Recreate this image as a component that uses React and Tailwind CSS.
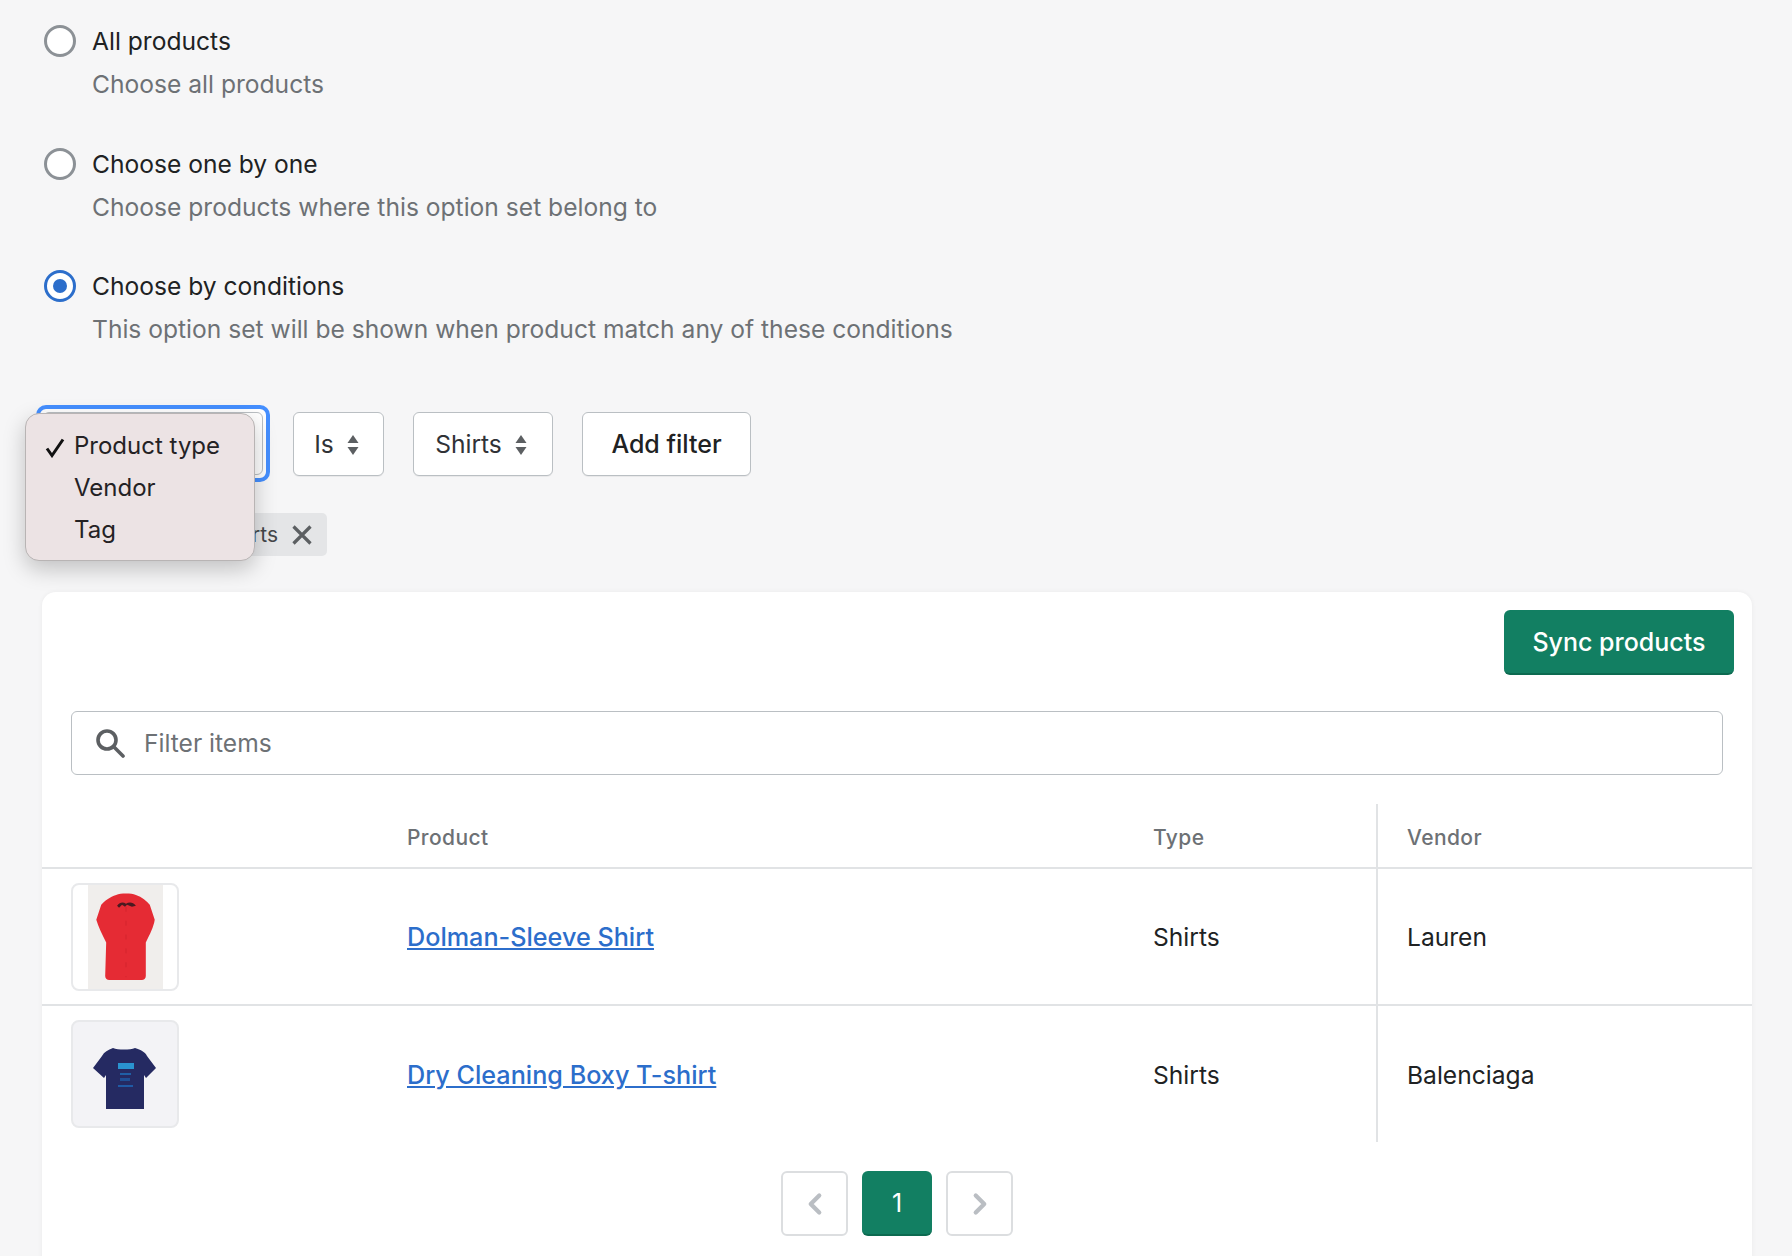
import { ChevronLeft, ChevronRight } from "lucide-react";

const font = "font-['Inter','Liberation_Sans',sans-serif]";

const options = [
  { label: "All products", help: "Choose all products" },
  { label: "Choose one by one", help: "Choose products where this option set belong to" },
  { label: "Choose by conditions", help: "This option set will be shown when product match any of these conditions", checked: true },
];

const products = [
  { name: "Dolman-Sleeve Shirt", vendor: "Lauren", thumb: <RedShirt /> },
  { name: "Dry Cleaning Boxy T-shirt", vendor: "Balenciaga", thumb: <NavyShirt /> },
];

function RedShirt() {
  return (
    <div className="h-full w-full rounded-[8px] border-2 border-[#e8e9eb] bg-white overflow-hidden flex justify-center">
      <div className="h-full w-[75px] bg-[#f0eeec]">
        <svg viewBox="0 0 75 105" className="h-full w-full blur-[0.4px]">
          <path d="M28 10 C33 8 43 8 48 10 C54 12 59 16 62 20 L67 35 C66 42 62 50 58 58 L58 92 C58 95 56 96 54 96 L21 96 C19 96 17 95 17 92 L18 58 C14 50 10 42 8 35 L13 20 C16 16 22 12 28 10 Z" fill="#e52b34" />
          <path d="M29 21 C32 17 35 17 38 19 C41 17 45 17 48 21 L44 22 L39 20 L37 22 L34 20 L31 23 Z" fill="#4a1a20" />
          <path d="M38 22 L38 93" stroke="#cc232c" strokeWidth="0.7" strokeDasharray="5 9" />
        </svg>
      </div>
    </div>
  );
}

function NavyShirt() {
  return (
    <div className="h-full w-full rounded-[8px] border-2 border-[#e8e9eb] bg-[#f3f3f6] overflow-hidden">
      <svg viewBox="0 0 104 104" className="h-full w-full blur-[0.4px]">
        <path d="M40 26 C45 28 57 28 62 26 C68 28 72 30 74 34 L83 46 L73 56 L71 53 L71 87 L33 87 L33 53 L31 56 L20 46 L29 34 C31 30 35 28 40 26 Z" fill="#252a62" />
        <rect x="45" y="41" width="16" height="6" fill="#2a93d0" />
        <rect x="47" y="51" width="11" height="2" fill="#1f5fa6" />
        <rect x="47" y="56" width="10" height="3" fill="#1f4f95" />
        <rect x="45" y="63" width="15" height="2" fill="#1f5aa5" />
      </svg>
    </div>
  );
}

function SelectArrows() {
  return (
    <svg viewBox="0 0 12 20" className="h-[20px] w-[12px] shrink-0 fill-[#5c5f62]">
      <path d="M6 0 L11.5 8 L0.5 8 Z" />
      <path d="M6 20 L11.5 12 L0.5 12 Z" />
    </svg>
  );
}

function Radio({ checked }) {
  return (
    <span className={`flex h-[32px] w-[32px] items-center justify-center rounded-full border-[3px] bg-white ${checked ? "border-[#2c6ecb]" : "border-[#8c9196]"}`}>
      {checked && <span className="h-[14px] w-[14px] rounded-full bg-[#2c6ecb]" />}
    </span>
  );
}

function FilterButton({ label }) {
  return (
    <button className="flex h-[64px] w-full items-center justify-center gap-[13px] rounded-[6px] border border-[#babfc3] bg-white pt-[2px] pr-[4px] shadow-[0_1px_0_rgba(0,0,0,0.05)] text-[24.6px] text-[#303236]">
      {label}
      <SelectArrows />
    </button>
  );
}

export default function App() {
  return (
    <div className={`${font} h-[1256px] overflow-hidden bg-[#f6f6f7] text-[#202223]`}>
      <div className="pt-[20px] pl-[44px]">
        {options.map((o) => (
          <div key={o.label} className="mb-[36.5px]">
            <div className="flex h-[42px] items-center gap-[16px]">
              <Radio checked={o.checked} />
              <span className="pt-[1px] text-[24.6px]">{o.label}</span>
            </div>
            <div className="pl-[48px] text-[24.6px] leading-[44px] text-[#6d7175]">{o.help}</div>
          </div>
        ))}
      </div>

      <div className="relative mt-[54px] pl-[36px]">
        <div className="flex items-center">
          <div className="h-[77px] w-[234px] rounded-[10px] border-[4px] border-[#458fff] bg-white p-[3px]">
            <div className="h-full rounded-[6px] border border-[#babfc3]" />
          </div>
          <div className="ml-[23px] w-[91px]">
            <FilterButton label="Is" />
          </div>
          <div className="ml-[29px] w-[140px]">
            <FilterButton label="Shirts" />
          </div>
          <button className="ml-[29px] h-[64px] w-[169px] rounded-[6px] border border-[#babfc3] bg-white pt-[2px] shadow-[0_1px_0_rgba(0,0,0,0.05)] text-[25px] font-medium">
            Add filter
          </button>
        </div>

        <div className="mt-[31px] ml-[6px] flex h-[43px] w-[285px] items-center justify-end gap-[14px] rounded-[5px] bg-[#e4e5e7] pr-[15px] text-[21px] text-[#44474a]">
          <span className="whitespace-nowrap">Product type is Shirts</span>
          <svg viewBox="0 0 20 20" className="h-[20px] w-[20px] shrink-0 stroke-[#5c5f62] stroke-[3.2]">
            <path d="M1.5 1.5 L18.5 18.5 M18.5 1.5 L1.5 18.5" />
          </svg>
        </div>

        <div className="absolute left-[25px] top-[8px] h-[148px] w-[230px] rounded-[14px] border border-[#b8b4b4] bg-[#ece3e4] pt-[11px] shadow-[0_8px_22px_rgba(0,0,0,0.22)] text-[24px] text-[#242224]">
          {["Product type", "Vendor", "Tag"].map((item, i) => (
            <div key={item} className="relative flex h-[42px] items-center pl-[48px]">
              {i === 0 && (
                <svg viewBox="0 0 20 20" className="absolute left-[19px] top-[12px] h-[21px] w-[20px] fill-none stroke-[#111] stroke-[3]">
                  <path d="M2 11 L7 18 L18 2" />
                </svg>
              )}
              {item}
            </div>
          ))}
        </div>
      </div>

      <div className="mt-[36px] ml-[42px] w-[1710px] rounded-t-[14px] bg-white pt-[18px] pb-[40px] shadow-[0_0_5px_rgba(23,24,24,0.05)]">
        <div className="flex justify-end pr-[18px]">
          <button className="h-[65px] w-[230px] rounded-[6px] border-b-2 border-[#0c6a50] bg-[#127f62] pt-[3px] text-[25px] font-medium text-white">
            Sync products
          </button>
        </div>

        <div className="mx-[29px] mt-[36px] flex h-[64px] items-center gap-[19px] rounded-[6px] border border-[#babfc3] pl-[23px] text-[24.6px] text-[#6d7175]">
          <svg viewBox="0 0 30 30" className="h-[30px] w-[30px] fill-none stroke-[#5c5f62]">
            <circle cx="12" cy="12" r="9" strokeWidth="3.6" />
            <path d="M18.5 18.5 L28 28" strokeWidth="3.6" strokeLinecap="round" />
          </svg>
          <span>Filter items</span>
        </div>

        <div className="mt-[29px] grid grid-cols-[365px_746px_223px_1fr] text-[24.6px]">
          <div className="h-[65px] border-b-2 border-[#e1e3e5]" />
          <div className="flex h-[65px] items-center border-b-2 border-[#e1e3e5] pt-[5px] text-[21px] font-medium tracking-[0.4px] text-[#6d7175]">Product</div>
          <div className="flex h-[65px] items-center border-b-2 border-[#e1e3e5] pt-[5px] text-[21px] font-medium tracking-[0.4px] text-[#6d7175]">Type</div>
          <div className="flex h-[65px] items-center border-b-2 border-l-2 border-[#e1e3e5] pl-[29px] pt-[5px] text-[21px] font-medium tracking-[0.4px] text-[#6d7175]">Vendor</div>

          {products.map((p, i) => (
            <div key={p.name} className="contents">
              <div className={`flex items-center pl-[29px] ${i === 0 ? "h-[137px] border-b-2 border-[#e1e3e5]" : "h-[136px]"}`}>
                <div className="h-[108px] w-[108px]">{p.thumb}</div>
              </div>
              <div className={`flex items-center pt-[3px] ${i === 0 ? "h-[137px] border-b-2 border-[#e1e3e5]" : "h-[136px]"}`}>
                <a href="#" className="text-[25.2px] font-medium text-[#2c6ecb] underline">{p.name}</a>
              </div>
              <div className={`flex items-center pt-[2px] ${i === 0 ? "h-[137px] border-b-2 border-[#e1e3e5]" : "h-[136px]"}`}>Shirts</div>
              <div className={`flex items-center border-l-2 border-[#e1e3e5] pl-[29px] pt-[2px] ${i === 0 ? "h-[137px] border-b-2" : "h-[136px]"}`}>{p.vendor}</div>
            </div>
          ))}
        </div>

        <div className="mt-[29px] flex items-center justify-center gap-[14px]">
          <button className="flex h-[65px] w-[67px] items-center justify-center rounded-[6px] border-2 border-[#dcdee0] text-[#babec3]">
            <ChevronLeft size={34} strokeWidth={3} />
          </button>
          <button className="h-[65px] w-[70px] rounded-[6px] border-b-2 border-[#0c6a50] bg-[#127f62] pt-[2px] text-[25px] text-white">1</button>
          <button className="flex h-[65px] w-[67px] items-center justify-center rounded-[6px] border-2 border-[#dcdee0] text-[#babec3]">
            <ChevronRight size={34} strokeWidth={3} />
          </button>
        </div>
      </div>
    </div>
  );
}
